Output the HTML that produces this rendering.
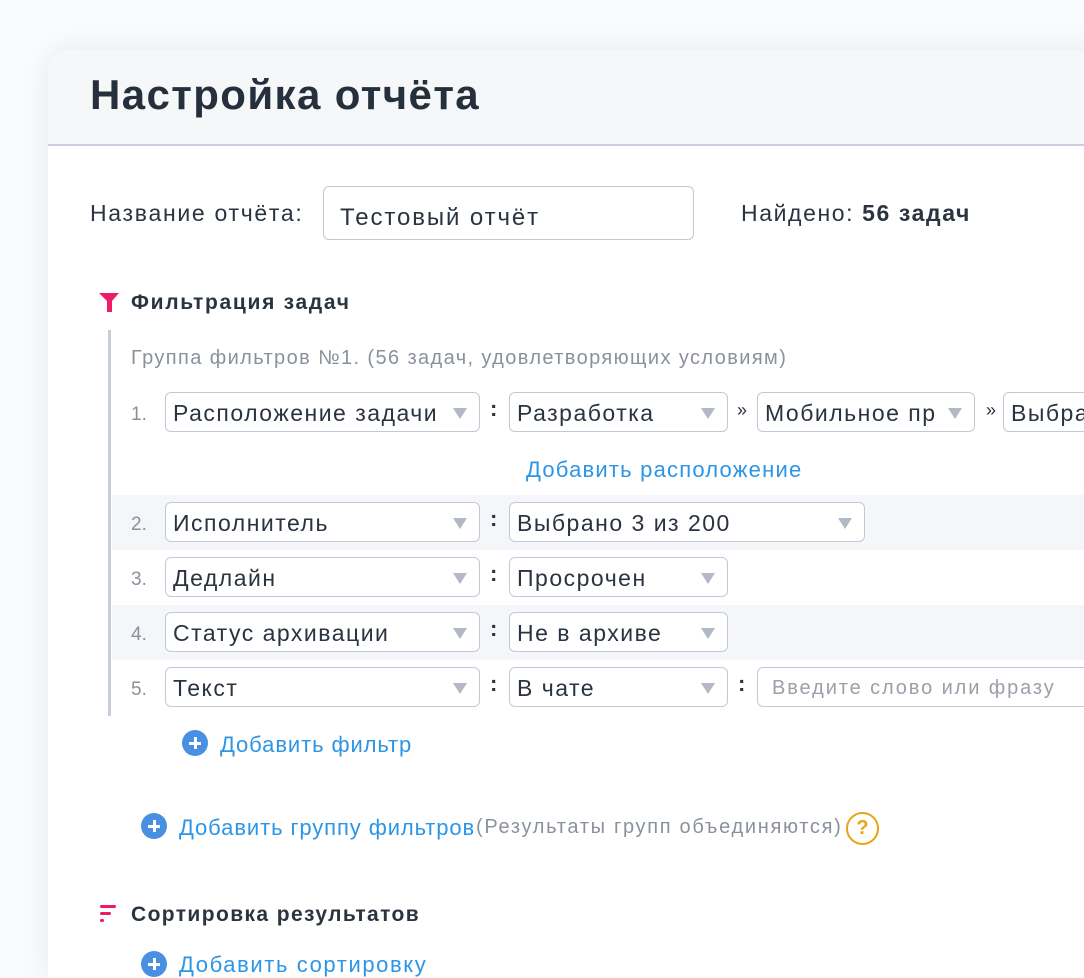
<!DOCTYPE html>
<html><head><meta charset="utf-8"><style>
*{box-sizing:border-box;margin:0;padding:0}
html,body{width:1084px;height:978px;overflow:hidden}
body{background:#fafbfc;font-family:"Liberation Sans","DejaVu Sans",sans-serif;color:#2a3340;position:relative}
.panel{position:absolute;left:48px;top:50px;width:1100px;height:928px;background:#fff;border-radius:22px 0 0 0;box-shadow:0 0 30px rgba(0,0,0,0.08)}
.hdr{position:absolute;left:48px;top:50px;width:1100px;height:96px;background:#f5f7f9;border-radius:22px 0 0 0;border-bottom:2px solid #c9d0dc}
.a{position:absolute;white-space:nowrap}
.sel{position:absolute;height:40px;border:1.5px solid #c3c9d4;border-radius:6px;background:#fff;font-size:23px;line-height:41px;padding-left:7px;letter-spacing:1.5px;overflow:hidden;white-space:nowrap}
.sel:after{content:"";position:absolute;right:12px;top:15px;border-left:7px solid transparent;border-right:7px solid transparent;border-top:11px solid #b3b9c4}
.sel.n:after{display:none}
.num{position:absolute;font-size:19px;color:#8a919c}
.col{position:absolute;font-size:22px;font-weight:bold;color:#2a3340}
.band{position:absolute;left:112px;width:980px;height:55px;background:#f4f6f9}
.link{color:#2d95e6;font-size:22px;letter-spacing:1.2px}
.plus{position:absolute;width:26px;height:26px;border-radius:50%;background:#4a90e2}
.plus:before{content:"";position:absolute;left:7px;top:11.5px;width:12px;height:3px;background:#fff}
.plus:after{content:"";position:absolute;left:11.5px;top:7px;width:3px;height:12px;background:#fff}
</style></head><body>
<div class="panel"></div>
<div class="hdr"></div>
<div class="a" style="left:90px;top:71px;font-size:42px;font-weight:bold;color:#26303c;letter-spacing:1.4px">Настройка отчёта</div>
<div class="a" style="left:90px;top:200px;font-size:23px;letter-spacing:1.7px">Название отчёта:</div>
<div class="sel n" style="left:323px;top:186px;width:371px;height:54px;line-height:62px;padding-left:16px;font-size:24px;letter-spacing:1.9px">Тестовый отчёт</div>
<div class="a" style="left:741px;top:200px;font-size:23px;letter-spacing:1.6px">Найдено: <b>56 задач</b></div>
<svg class="a" style="left:99px;top:293px" width="22" height="20"><path d="M0 0H20L13 8V19H8V8Z" fill="#ee1a6a"/></svg>
<div class="a" style="left:131px;top:291px;font-size:21px;font-weight:bold;letter-spacing:1.7px">Фильтрация задач</div>
<div class="a" style="left:108px;top:330px;width:3px;height:386px;background:#c9cfd9"></div>
<div class="a" style="left:131px;top:347px;font-size:20px;color:#8a919c;letter-spacing:1.4px">Группа фильтров №1. (56 задач, удовлетворяющих условиям)</div>
<div class="band" style="top:495px"></div>
<div class="band" style="top:605px"></div>
<div class="num" style="left:131px;top:404px">1.</div>
<div class="sel" style="left:165px;top:392px;width:315px">Расположение задачи</div>
<div class="col" style="left:490px;top:396px">:</div>
<div class="sel" style="left:509px;top:392px;width:219px">Разработка</div>
<div class="a" style="left:737px;top:400px;font-size:18px">»</div>
<div class="sel" style="left:757px;top:392px;width:218px;padding-right:40px">Мобильное пр</div>
<div class="a" style="left:986px;top:400px;font-size:18px">»</div>
<div class="sel n" style="left:1003px;top:392px;width:120px">Выбрано</div>
<div class="a link" style="left:526px;top:457px">Добавить расположение</div>
<div class="num" style="left:131px;top:514px">2.</div>
<div class="sel" style="left:165px;top:502px;width:315px">Исполнитель</div>
<div class="col" style="left:490px;top:506px">:</div>
<div class="sel" style="left:509px;top:502px;width:356px">Выбрано 3 из 200</div>
<div class="num" style="left:131px;top:569px">3.</div>
<div class="sel" style="left:165px;top:557px;width:315px">Дедлайн</div>
<div class="col" style="left:490px;top:561px">:</div>
<div class="sel" style="left:509px;top:557px;width:219px">Просрочен</div>
<div class="num" style="left:131px;top:624px">4.</div>
<div class="sel" style="left:165px;top:612px;width:315px">Статус архивации</div>
<div class="col" style="left:490px;top:616px">:</div>
<div class="sel" style="left:509px;top:612px;width:219px">Не в архиве</div>
<div class="num" style="left:131px;top:679px">5.</div>
<div class="sel" style="left:165px;top:667px;width:315px">Текст</div>
<div class="col" style="left:490px;top:671px">:</div>
<div class="sel" style="left:509px;top:667px;width:219px">В чате</div>
<div class="col" style="left:738px;top:671px">:</div>
<div class="sel n" style="left:757px;top:667px;width:360px;color:#9aa0aa;font-size:20px;padding-left:14px;letter-spacing:1.9px">Введите слово или фразу</div>
<div class="plus" style="left:182px;top:730px"></div>
<div class="a link" style="left:220px;top:732px;letter-spacing:0.9px">Добавить фильтр</div>
<div class="plus" style="left:141px;top:813px"></div>
<div class="a link" style="left:179px;top:815px;letter-spacing:0.9px">Добавить группу фильтров</div>
<div class="a" style="left:476px;top:816px;font-size:20px;color:#8a919c;letter-spacing:1.7px">(Результаты групп объединяются)</div>
<div class="a" style="left:846px;top:812px;width:33px;height:33px;border:2px solid #e8a317;border-radius:50%;color:#e8a317;font-weight:bold;font-size:20px;text-align:center;line-height:29px">?</div>
<svg class="a" style="left:100px;top:905px" width="16" height="18"><rect x="0" y="0" width="16" height="3" rx="1.5" fill="#ee1a6a"/><rect x="0" y="7" width="11" height="3" rx="1.5" fill="#ee1a6a"/><rect x="0" y="14" width="4" height="3" rx="1.5" fill="#ee1a6a"/></svg>
<div class="a" style="left:131px;top:903px;font-size:21px;font-weight:bold;letter-spacing:1.4px">Сортировка результатов</div>
<div class="plus" style="left:141px;top:951px"></div>
<div class="a link" style="left:179px;top:952px;letter-spacing:1.6px">Добавить сортировку</div>
</body></html>
